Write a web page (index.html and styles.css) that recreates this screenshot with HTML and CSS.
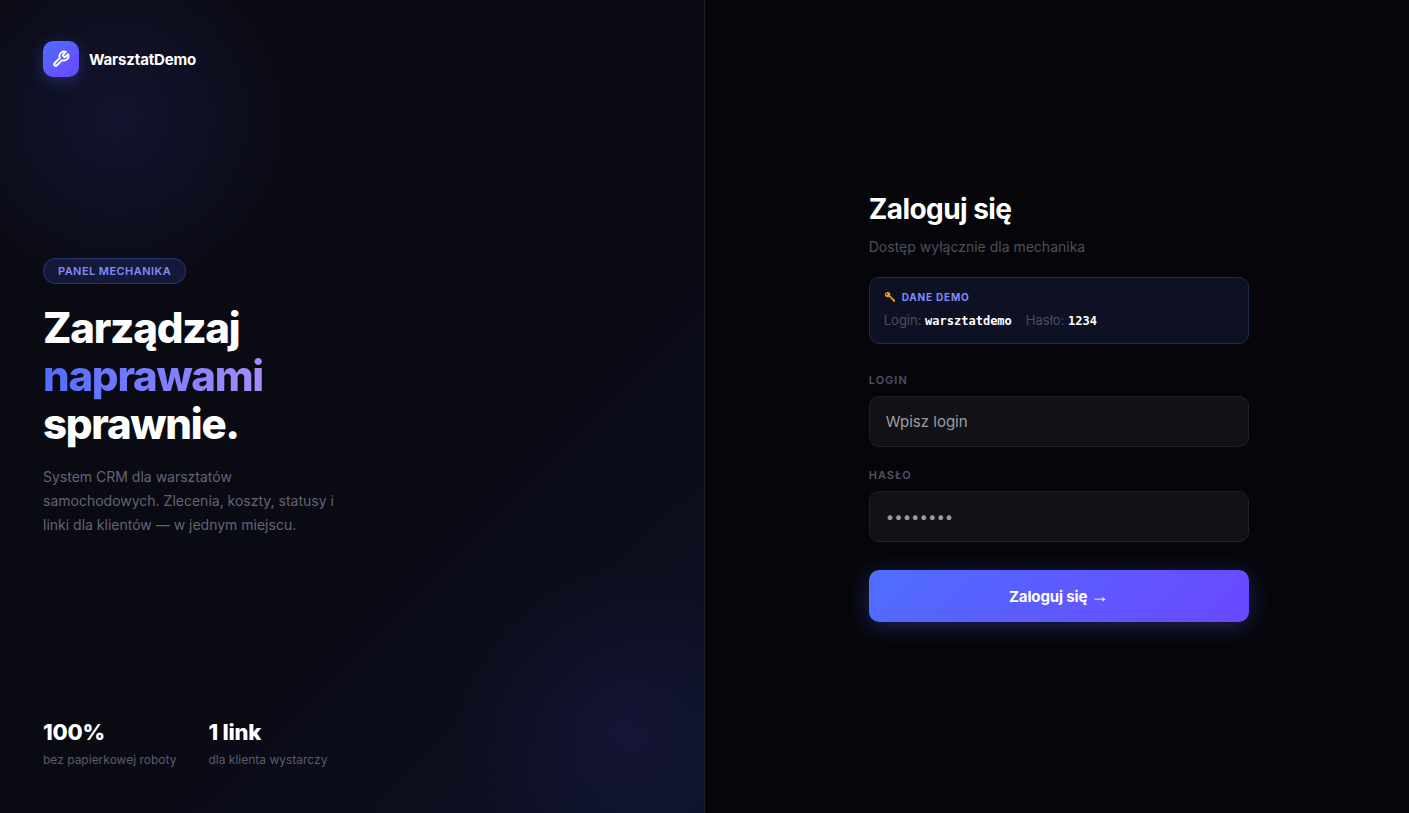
FILE: index.html
```
<!DOCTYPE html>
<html lang="pl">
<head>
    <meta charset="UTF-8">
    <meta name="viewport" content="width=device-width, initial-scale=1.0">
    <title>WarsztatDemo – Panel mechanika</title>
    <link rel="stylesheet" href="styles.css">
</head>
<body>
    <div class="page">
        <section class="left">
            <div class="brand">
                <div class="brand-icon">
                    <svg width="18" height="18" viewBox="0 0 24 24" fill="none" stroke="currentColor" stroke-width="2.5" stroke-linecap="round" stroke-linejoin="round" aria-hidden="true">
                        <path d="M14.7 6.3a1 1 0 0 0 0 1.4l1.6 1.6a1 1 0 0 0 1.4 0l3.77-3.77a6 6 0 0 1-7.94 7.94l-6.91 6.91a2.12 2.12 0 0 1-3-3l6.91-6.91a6 6 0 0 1 7.94-7.94l-3.76 3.76z"/>
                    </svg>
                </div>
                <span class="brand-name">WarsztatDemo</span>
            </div>

            <div class="hero">
                <span class="badge">Panel mechanika</span>
                <h1>Zarządzaj<br><span class="accent">naprawami</span><br>sprawnie.</h1>
                <p>System CRM dla warsztatów samochodowych. Zlecenia, koszty, statusy i linki dla klientów — w jednym miejscu.</p>
            </div>

            <div class="stats">
                <div>
                    <div class="stat-value">100%</div>
                    <div class="stat-label">bez papierkowej roboty</div>
                </div>
                <div>
                    <div class="stat-value">1 link</div>
                    <div class="stat-label">dla klienta wystarczy</div>
                </div>
            </div>
        </section>

        <main class="right">
            <form class="login-form">
                <h2>Zaloguj się</h2>
                <p class="subtitle">Dostęp wyłącznie dla mechanika</p>

                <div class="demo-box">
                    <div class="demo-title">
                        <svg width="12" height="12" viewBox="0 0 24 24" aria-hidden="true">
                            <path fill="#e9a21b" fill-rule="evenodd" d="M3 4C6 1 10 1 12 4c1 2 1 4 0 5l10 9v3l-2 1-3-3-1-2-2-1-1-2-3-2c-2 1-4 1-6-1C1 9 1 6 3 4zm2 1a1.500 1.500 0 1 0 2 2 1.500 1.500 0 0 0-2-2z"/>
                        </svg>
                        Dane demo
                    </div>
                    <div class="demo-data">
                        <span>Login: <strong>warsztatdemo</strong></span>
                        <span>Hasło: <strong>1234</strong></span>
                    </div>
                </div>

                <div class="field">
                    <label for="login">Login</label>
                    <input type="text" id="login" placeholder="Wpisz login">
                </div>
                <div class="field">
                    <label for="password">Hasło</label>
                    <input type="password" id="password" placeholder="••••••••">
                </div>
                <button type="submit">Zaloguj się <span class="arrow">→</span></button>
            </form>
        </main>
    </div>
</body>
</html>
```

FILE: styles.css
```
* {
    margin: 0;
    padding: 0;
    box-sizing: border-box;
}
body {
    font-family: 'Inter', sans-serif;
    background-color: #06060a;
    color: #fff;
}
.page {
    display: grid;
    grid-template-columns: 1fr 1fr;
    min-height: 100vh;
}

/* lewa strona */
.left {
    display: flex;
    flex-direction: column;
    justify-content: space-between;
    padding: 41px 43px 45px;
    border-right: 1px solid #1c1c22;
    background:
        radial-gradient(circle at 117px 117px, rgba(79, 90, 255, 0.12), transparent 190px),
        radial-gradient(circle at right 80px bottom 80px, rgba(107, 71, 255, 0.09), transparent 170px),
        linear-gradient(135deg, #0a0a12 0%, #0a0a14 60%, #0c1226 100%);
}
.brand {
    display: flex;
    align-items: center;
    gap: 10px;
}
.brand-icon {
    display: flex;
    align-items: center;
    justify-content: center;
    width: 36px;
    height: 36px;
    border-radius: 10px;
    background: linear-gradient(135deg, #4f6eff, #6b47ff);
    box-shadow: 0 4px 16px rgba(79, 110, 255, 0.3);
}
.brand-name {
    font-size: 15px;
    font-weight: 700;
    letter-spacing: -0.01em;
}
.hero {
    padding-bottom: 1px;
}
.badge {
    display: inline-block;
    padding: 5px 14px;
    border: 1px solid rgba(79, 110, 255, 0.3);
    border-radius: 20px;
    background: rgba(79, 110, 255, 0.15);
    color: #818cf8;
    font-size: 11px;
    line-height: 14px;
    font-weight: 600;
    letter-spacing: 0.04em;
    text-transform: uppercase;
}
h1 {
    margin: 20px 0 17px;
    font-size: 42px;
    line-height: 1.15;
    font-weight: 800;
    letter-spacing: -0.03em;
}
.accent {
    background: linear-gradient(90deg, #4f6eff, #a78bfa);
    -webkit-background-clip: text;
    background-clip: text;
    color: transparent;
}
.hero p {
    max-width: 300px;
    color: #646375;
    font-size: 14px;
    line-height: 24px;
}
.stats {
    display: flex;
    gap: 32px;
}
.stat-value {
    font-size: 22px;
    line-height: 27px;
    font-weight: 800;
    letter-spacing: -0.01em;
}
.stat-label {
    margin-top: 6px;
    color: #5c5b6c;
    font-size: 12px;
    line-height: 16px;
}

/* prawa strona */
.right {
    display: flex;
    align-items: center;
    justify-content: center;
    padding: 25px 24px 24px 28px;
}
.login-form {
    width: 100%;
    max-width: 380px;
}
h2 {
    font-size: 28px;
    line-height: 34px;
    font-weight: 700;
    letter-spacing: -0.02em;
}
.subtitle {
    margin: 12px 0 21px;
    color: #4e4d5e;
    font-size: 14px;
    line-height: 18px;
}
.demo-box {
    margin-bottom: 28px;
    padding: 12px 14px 13px;
    border: 1px solid #20294f;
    border-radius: 10px;
    background: #0d1123;
}
.demo-title {
    display: flex;
    align-items: center;
    gap: 6px;
    color: #818cf8;
    font-size: 10px;
    line-height: 14px;
    font-weight: 700;
    letter-spacing: 0.08em;
    text-transform: uppercase;
}
.demo-data {
    display: flex;
    gap: 14px;
    margin-top: 7px;
    color: #4e4d5e;
    font-size: 13px;
    line-height: 18px;
}
.demo-data strong {
    color: #fff;
    font-family: 'DejaVu Sans Mono', monospace;
    font-size: 12px;
}
.field {
    margin-bottom: 20px;
}
.field label {
    display: block;
    margin-bottom: 8px;
    color: #525163;
    font-size: 11px;
    line-height: 16px;
    font-weight: 600;
    letter-spacing: 1px;
    text-transform: uppercase;
}
.field input {
    width: 100%;
    height: 51px;
    padding: 0 16px;
    border: 1px solid #222226;
    border-radius: 10px;
    outline: none;
    background: #121216;
    color: #fff;
    font-family: inherit;
    font-size: 15px;
}
.field input::placeholder {
    color: #9b9ca3;
}
.field input:focus {
    border-color: #4f6eff;
}
button {
    width: 100%;
    height: 52px;
    margin-top: 8px;
    border: none;
    border-radius: 10px;
    background: linear-gradient(135deg, #4f6eff, #6b47ff);
    box-shadow: 0 4px 24px rgba(79, 110, 255, 0.3);
    color: #fff;
    font-family: inherit;
    font-size: 15px;
    font-weight: 700;
    letter-spacing: -0.01em;
    cursor: pointer;
}
.arrow {
    font-family: 'Liberation Sans', sans-serif;
    font-size: 18px;
    line-height: 1;
    font-weight: 400;
}

@media (max-width: 768px) {
    .page {
        grid-template-columns: 1fr;
    }
    .left {
        gap: 48px;
        border-right: none;
    }
}
```
